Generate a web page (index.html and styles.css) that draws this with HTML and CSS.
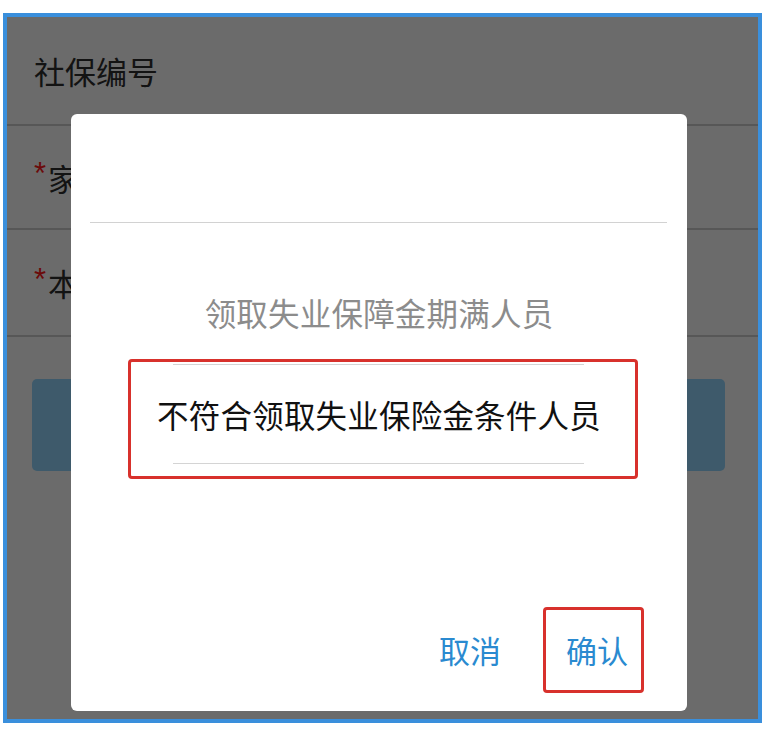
FILE: index.html
```html
<!DOCTYPE html>
<html lang="zh-CN">
<head>
<meta charset="utf-8">
<title>社保编号</title>
<link rel="stylesheet" href="styles.css">
</head>
<body>
<div class="frame">
  <div class="page">
    <div class="row"><span class="label">社保编号</span></div>
    <div class="row"><span class="req">*</span><span class="label">家庭住址</span></div>
    <div class="row row3"><span class="req">*</span><span class="label">本人身份</span></div>
    <div class="submit"></div>
  </div>
  <div class="overlay">
    <div class="dialog">
      <div class="dlg-head"></div>
      <div class="picker">
        <div class="item">领取失业保障金期满人员</div>
        <div class="item sel">不符合领取失业保险金条件人员</div>
        <div class="item"></div>
      </div>
      <div class="mark"></div>
      <div class="actions">
        <span class="btn">取消</span>
        <span class="btn ok">确认</span>
      </div>
    </div>
  </div>
</div>
</body>
</html>
```

FILE: styles.css
```css
html, body {
  margin: 0;
  padding: 0;
  background: #ffffff;
}

body {
  font-family: "Noto Sans CJK SC", "Noto Sans", sans-serif;
}

.frame {
  position: relative;
  box-sizing: border-box;
  width: 759px;
  height: 710px;
  margin: 13px 0 0 3px;
  border: 4px solid #3a8fdc;
  background: #ffffff;
  overflow: hidden;
}

.page {
  display: flex;
  flex-direction: column;
}

.row {
  display: flex;
  align-items: center;
  height: 102px;
  padding-left: 27px;
  border-bottom: 2px solid #cfcfcf;
}

.row:first-child {
  height: 107px;
}

.row3 {
  height: 105px;
}

.label {
  font-size: 31px;
  color: #2e2e2e;
  white-space: nowrap;
}

.req {
  font-family: "Liberation Sans", sans-serif;
  font-size: 31px;
  color: #ff1a1a;
  align-self: center;
  margin-top: -6px;
  margin-right: 2px;
}

.submit {
  height: 92px;
  margin: 42px 33px 0 25px;
  border-radius: 5px;
  background: #94d6ff;
}

.overlay {
  position: absolute;
  inset: 0;
  background: rgba(0, 0, 0, 0.58);
  display: flex;
  align-items: flex-start;
  padding: 97px 0 0 64px;
}

.dialog {
  position: relative;
  width: 616px;
  height: 597px;
  background: #ffffff;
  border-radius: 6px;
  display: flex;
  flex-direction: column;
}

.dlg-head {
  height: 108px;
  margin: 0 20px 0 19px;
  border-bottom: 1px solid #d2d2d2;
}

.picker {
  padding-top: 41px;
}

.item {
  position: relative;
  height: 100px;
  line-height: 100px;
  text-align: center;
  font-size: 31.5px;
  letter-spacing: 0.2px;
  color: #8c8c8c;
  white-space: nowrap;
}

.item:first-child {
  line-height: 96px;
}

.item.sel {
  color: #111111;
}

.item.sel::before,
.item.sel::after {
  content: "";
  position: absolute;
  left: 102px;
  right: 103px;
  height: 1px;
  background: #d4d4d4;
}

.item.sel::before { top: 0; }
.item.sel::after { bottom: 0; }

.mark {
  position: absolute;
  left: 57px;
  top: 245px;
  width: 510px;
  height: 120px;
  box-sizing: border-box;
  border: 3px solid #d8312c;
  border-radius: 4px;
}

.actions {
  margin-top: auto;
  display: flex;
  justify-content: flex-end;
  gap: 26px;
  padding: 0 43px 18px 0;
}

.btn {
  box-sizing: border-box;
  height: 86px;
  line-height: 80px;
  padding: 0 13px 0 20px;
  border: 3px solid transparent;
  border-radius: 4px;
  font-size: 31px;
  color: #2a8ad0;
}

.btn.ok {
  border-color: #d8312c;
}
```
